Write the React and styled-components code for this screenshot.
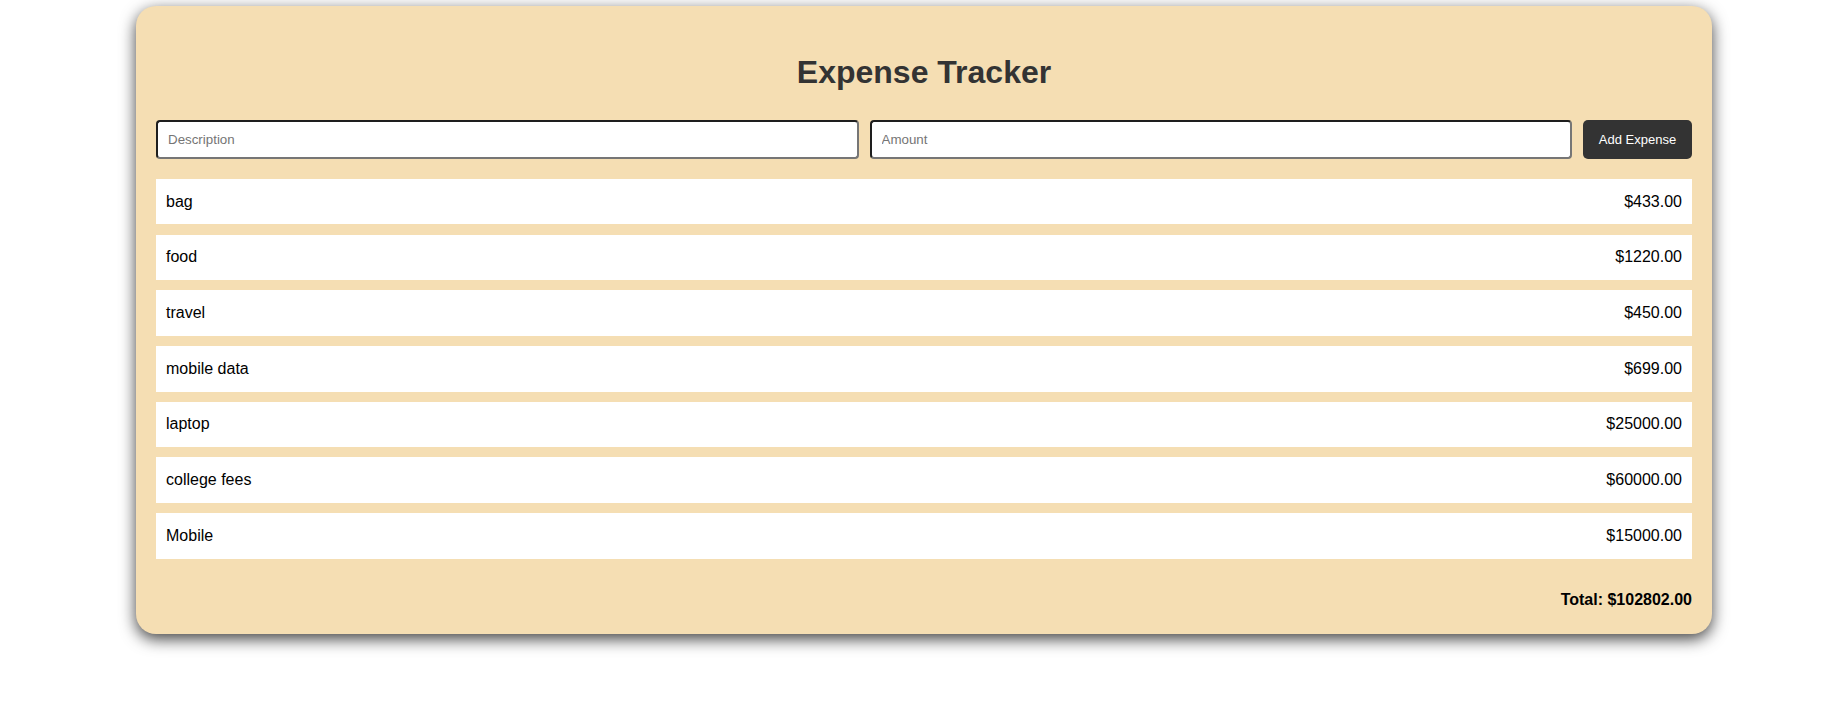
import React, { useState } from 'react';
import styled, { createGlobalStyle } from 'styled-components';

const GlobalStyle = createGlobalStyle`
  body {
    margin: 0;
    background: #fff;
    font-family: "Liberation Sans", Arial, sans-serif;
  }
`;

const Page = styled.div`
  padding: 6px 0 40px 136px;
`;

const Card = styled.div`
  box-sizing: border-box;
  width: 1576px;
  padding: 47.8px 20px 25px;
  background: #f5deb3;
  border-radius: 20px;
  box-shadow: 0 5px 16px rgba(0, 0, 0, 0.75);
`;

const Title = styled.h1`
  margin: 0 0 29.4px;
  font-size: 32px;
  line-height: 36.8px;
  font-weight: 700;
  color: #333;
  text-align: center;
`;

const Form = styled.div`
  display: flex;
  gap: 11px;
  height: 38.7px;
`;

const Input = styled.input`
  flex: 1;
  min-width: 0;
  box-sizing: border-box;
  height: 100%;
  padding: 0 10px;
  border: 2px solid;
  border-color: #1e1e1e #767676 #767676 #1e1e1e;
  border-radius: 4px;
  background: #fff;
  font-family: "Liberation Sans", Arial, sans-serif;
  font-size: 13.33px;
  color: #000;

  &::placeholder {
    color: #757575;
  }
`;

const Button = styled.button`
  width: 109px;
  height: 100%;
  border: none;
  border-radius: 5px;
  background: #333;
  color: #fff;
  font-family: "Liberation Sans", Arial, sans-serif;
  font-size: 13px;
  cursor: pointer;
`;

const List = styled.ul`
  list-style: none;
  margin: 20.3px 0 0;
  padding: 0;
  display: flex;
  flex-direction: column;
  gap: 10.2px;
`;

const Row = styled.li`
  display: flex;
  justify-content: space-between;
  align-items: center;
  height: 45.5px;
  padding: 0 10px;
  background: #fff;
  font-size: 16px;
  color: #000;
`;

const Total = styled.div`
  margin-top: 32.4px;
  text-align: right;
  font-size: 16px;
  line-height: 18.4px;
  font-weight: 700;
  color: #000;
`;

const initial = [
  { name: 'bag', amount: 433 },
  { name: 'food', amount: 1220 },
  { name: 'travel', amount: 450 },
  { name: 'mobile data', amount: 699 },
  { name: 'laptop', amount: 25000 },
  { name: 'college fees', amount: 60000 },
  { name: 'Mobile', amount: 15000 },
];

export default function App() {
  const [expenses, setExpenses] = useState(initial);
  const [desc, setDesc] = useState('');
  const [amount, setAmount] = useState('');

  const add = () => {
    const value = parseFloat(amount);
    if (!desc.trim() || isNaN(value)) return;
    setExpenses([...expenses, { name: desc.trim(), amount: value }]);
    setDesc('');
    setAmount('');
  };

  const total = expenses.reduce((sum, e) => sum + e.amount, 0);

  return (
    <Page>
      <GlobalStyle />
      <Card>
        <Title>Expense Tracker</Title>
        <Form>
          <Input
            placeholder="Description"
            value={desc}
            onChange={(e) => setDesc(e.target.value)}
          />
          <Input
            placeholder="Amount"
            type="number"
            value={amount}
            onChange={(e) => setAmount(e.target.value)}
          />
          <Button onClick={add}>Add Expense</Button>
        </Form>
        <List>
          {expenses.map((e, i) => (
            <Row key={i}>
              <span>{e.name}</span>
              <span>${e.amount.toFixed(2)}</span>
            </Row>
          ))}
        </List>
        <Total>Total: ${total.toFixed(2)}</Total>
      </Card>
    </Page>
  );
}
